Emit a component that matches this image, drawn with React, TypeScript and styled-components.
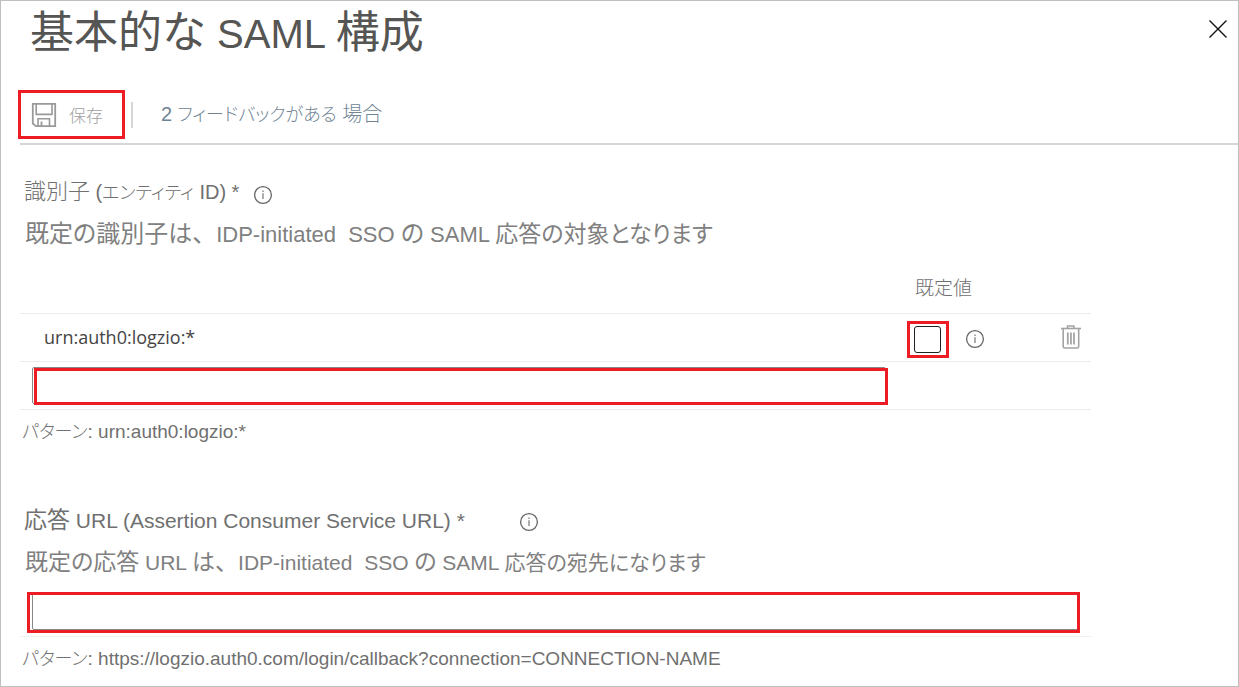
import React from "react";
import styled, { createGlobalStyle } from "styled-components";

const RED = "#ed1c24";

const GlobalStyle = createGlobalStyle`
  *, *::before, *::after { box-sizing: border-box; }
  body {
    margin: 0;
    background: #fff;
    color: #777;
    font-family: "Liberation Sans", "Noto Sans CJK JP", sans-serif;
    font-feature-settings: "palt";
  }
  button { font: inherit; color: inherit; background: none; border: 0; padding: 0; }
`;

const Panel = styled.main`
  min-height: 100vh;
  border: 1px solid #bfbfbf;
  padding-left: 19px;
`;

const Header = styled.header`
  display: flex;
  justify-content: space-between;
  align-items: flex-start;
  padding: 0 8px 0 10px;
`;

const Title = styled.h1`
  margin: 0;
  font-size: 44px;
  line-height: 64px;
  font-weight: 400;
  color: #555553;
  font-feature-settings: normal;
`;

const Sized = styled.span<{ $size: number }>`
  font-size: ${(p) => p.$size}px;
  white-space: pre;
`;

const FullWidth = styled.span`
  font-feature-settings: normal;
`;

const CloseButton = styled.button`
  display: flex;
  padding: 16px 0;
  color: #111;
`;

const Toolbar = styled.div`
  display: flex;
  align-items: center;
  margin-top: 24px;
  padding-bottom: 4px;
  border-bottom: 2px solid #d6d6d6;
`;

const SaveButton = styled.button`
  display: flex;
  align-items: center;
  gap: 12px;
  width: 107px;
  height: 49px;
  margin-left: -2px;
  padding-left: 10px;
  border: 3px solid ${RED};
  font-size: 17px;
  font-weight: 300;
  color: #a0a0a0;
`;

const Divider = styled.span`
  width: 2px;
  height: 26px;
  margin: 0 28px 0 6px;
  background: #d6d6d6;
`;

const FeedbackButton = styled.button`
  font-size: 18px;
  line-height: 28px;
  font-weight: 300;
  color: #708494;
`;

const Section = styled.section`
  padding-right: 147px;
`;

const LabelRow = styled.div<{ $top: number; $gap: number }>`
  display: flex;
  align-items: center;
  gap: ${(p) => p.$gap}px;
  margin-top: ${(p) => p.$top}px;
  padding-left: 4px;
  line-height: 32px;

  button { padding-top: 4px; }
`;

const Label = styled.label<{ $size: number; $weight: number }>`
  font-size: ${(p) => p.$size}px;
  font-weight: ${(p) => p.$weight};
  color: #707070;
`;

const InfoButton = styled.button`
  display: flex;
`;

const Description = styled.p<{ $size: number }>`
  margin: 5px 0 0;
  padding-left: 5px;
  font-size: ${(p) => p.$size}px;
  line-height: 40px;
  color: #808080;
`;

const Table = styled.table`
  width: 100%;
  margin-top: 5px;
  table-layout: fixed;
  border-collapse: collapse;

  tr { height: 48px; border-bottom: 1px solid #ececec; }
  thead tr { height: 53px; }
  th, td { padding: 0; text-align: left; font-weight: 400; }
`;

const DefaultHead = styled.th`
  width: 154px;
  font-size: 19px;
  color: #707070;
  && { padding-left: 8px; font-weight: 300; }
`;

const DeleteHead = styled.th`
  width: 30px;
`;

const NameCell = styled.td`
  && { padding-left: 24px; }
  font-family: "Open Sans", "Noto Sans", sans-serif;
  font-size: 18px;
  color: #444;
`;

const InputCell = styled.td`
  && { padding-left: 12px; }
`;

const DefaultCell = styled.div`
  display: flex;
  align-items: center;
  gap: 16px;
  padding-top: 4px;
`;

const CheckFrame = styled.span`
  display: flex;
  align-items: center;
  width: 42px;
  height: 37px;
  padding-left: 4px;
  border: 3px solid ${RED};
`;

const CheckBox = styled.input`
  appearance: none;
  width: 27px;
  height: 27px;
  margin: 0;
  border: 1px solid #222;
  border-radius: 3px;
`;

const DeleteButton = styled.button`
  display: flex;
  color: #a3a3a3;
`;

const Field = styled.div<{ $inset: string }>`
  position: relative;
  display: flex;

  &::after {
    content: "";
    position: absolute;
    inset: ${(p) => p.$inset};
    border: 3px solid ${RED};
    pointer-events: none;
  }
`;

const IdentifierField = styled(Field)`
  margin-right: 21px;
`;

const ReplyField = styled(Field)`
  margin: 10px 12px 6px;
`;

const TextInput = styled.input`
  flex: 1;
  min-width: 0;
  height: 37px;
  padding: 0 10px;
  border: 1px solid #8a8886;
  border-radius: 2px;
  font-size: 19px;
`;

const ReplyRow = styled.div`
  border-bottom: 1px solid #f0f0f0;
`;

const Pattern = styled.p`
  margin: 6px 0 0;
  padding-left: 2px;
  font-size: 18px;
  line-height: 32px;
  font-weight: 300;
  color: #707070;
`;

const InfoIcon = () => (
  <svg width="20" height="20" viewBox="0 0 20 20" fill="none" aria-hidden="true">
    <circle cx="10" cy="10" r="8.4" stroke="#666" strokeWidth="1.3" />
    <path d="M10 8.2V14" stroke="#888" strokeWidth="1.4" />
    <path d="M10 5.6V7" stroke="#888" strokeWidth="1.4" />
  </svg>
);

const CloseIcon = () => (
  <svg width="24" height="24" viewBox="0 0 24 24" fill="none" aria-hidden="true">
    <path d="M3.5 3.5L20.5 20.5M20.5 3.5L3.5 20.5" stroke="currentColor" strokeWidth="1.4" />
  </svg>
);

const SaveIcon = () => (
  <svg width="26" height="26" viewBox="0 0 26 26" fill="none" stroke="#999" aria-hidden="true">
    <path d="M1.8 1.8H24.2V24.2H5L1.8 21.5Z" strokeWidth="1.8" />
    <path d="M5.2 1.8V12.4H21V1.8" strokeWidth="1.6" />
    <path d="M7 24V16.8H18.5V24" strokeWidth="1.6" />
    <path d="M10.5 19.5V24" strokeWidth="1.8" />
  </svg>
);

const TrashIcon = () => (
  <svg width="20" height="24" viewBox="0 0 20 24" fill="none" stroke="currentColor" aria-hidden="true">
    <path d="M0 3.5H20" strokeWidth="1.6" />
    <path d="M6.5 3.3V1H13V3.3" strokeWidth="1.5" />
    <path d="M2.2 4V21.5Q2.2 23 3.8 23H16Q17.7 23 17.7 21.5V4" strokeWidth="1.6" />
    <path d="M6.8 7.5V19.5M9.9 7.5V19.5M13 7.5V19.5" strokeWidth="1.8" />
  </svg>
);

const Info = () => (
  <InfoButton type="button" aria-label="情報">
    <InfoIcon />
  </InfoButton>
);

export default function App() {
  return (
    <Panel>
      <GlobalStyle />
      <Header>
        <Title>
          基本的な<Sized $size={40}> SAML </Sized>構成
        </Title>
        <CloseButton type="button" aria-label="閉じる">
          <CloseIcon />
        </CloseButton>
      </Header>

      <Toolbar>
        <SaveButton type="button">
          <SaveIcon />
          保存
        </SaveButton>
        <Divider />
        <FeedbackButton type="button">
          <Sized $size={20}>2 </Sized>フィードバックがある<Sized $size={20}> 場合</Sized>
        </FeedbackButton>
      </Toolbar>

      <Section>
        <LabelRow $top={31} $gap={14}>
          <Label $size={22} $weight={300} htmlFor="identifier">
            識別子<Sized $size={20}> (</Sized>
            <Sized $size={18}>エンティティ</Sized>
            <Sized $size={20}> ID) *</Sized>
          </Label>
          <Info />
        </LabelRow>
        <Description $size={24}>
          既定の識別子は<FullWidth>、</FullWidth>
          <Sized $size={22}>IDP-initiated  SSO </Sized>の<Sized $size={22}> SAML </Sized>
          <Sized $size={23}>応答の対象となります</Sized>
        </Description>

        <Table>
          <thead>
            <tr>
              <th />
              <DefaultHead scope="col">既定値</DefaultHead>
              <DeleteHead />
            </tr>
          </thead>
          <tbody>
            <tr>
              <NameCell>urn:auth0:logzio:*</NameCell>
              <td>
                <DefaultCell>
                  <CheckFrame>
                    <CheckBox type="checkbox" aria-label="既定値" />
                  </CheckFrame>
                  <Info />
                </DefaultCell>
              </td>
              <td>
                <DeleteButton type="button" aria-label="削除">
                  <TrashIcon />
                </DeleteButton>
              </td>
            </tr>
            <tr>
              <InputCell>
                <IdentifierField $inset="1px -2px -1px 2px">
                  <TextInput id="identifier" type="text" />
                </IdentifierField>
              </InputCell>
              <td />
              <td />
            </tr>
          </tbody>
        </Table>
        <Pattern>
          パターン<Sized $size={19}>: urn:auth0:logzio:*</Sized>
        </Pattern>
      </Section>

      <Section>
        <LabelRow $top={56} $gap={54}>
          <Label $size={23} $weight={400} htmlFor="reply-url">
            応答<Sized $size={21}> URL (Assertion Consumer Service URL) *</Sized>
          </Label>
          <Info />
        </LabelRow>
        <Description $size={23}>
          既定の応答<Sized $size={21}> URL </Sized>は<FullWidth>、</FullWidth>
          <Sized $size={21}>IDP-initiated  SSO </Sized>の<Sized $size={21}> SAML </Sized>
          <Sized $size={21}>応答の宛先になります</Sized>
        </Description>
        <ReplyRow>
          <ReplyField $inset="-1px -1px -3px -5px">
            <TextInput id="reply-url" type="text" />
          </ReplyField>
        </ReplyRow>
        <Pattern>
          パターン
          <Sized $size={19}>
            : https://logzio.auth0.com/login/callback?connection=CONNECTION-NAME
          </Sized>
        </Pattern>
      </Section>
    </Panel>
  );
}
